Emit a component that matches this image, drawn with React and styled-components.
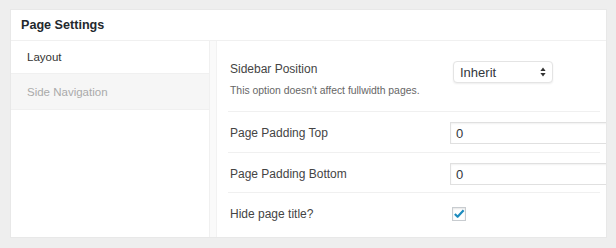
import React from 'react'
import styled, { createGlobalStyle } from 'styled-components'

const GlobalStyle = createGlobalStyle`
  html, body {
    margin: 0;
    padding: 0;
    background: #eeeeee;
    font-family: "Liberation Sans", Arial, sans-serif;
  }
`

const Page = styled.div`
  width: 616px;
  height: 248px;
  padding: 9px 9px 10px 10px;
  box-sizing: border-box;
`

const Panel = styled.div`
  height: 100%;
  background: #fff;
  border: 1px solid #e8e8e8;
  box-sizing: border-box;
  display: flex;
  flex-direction: column;
  overflow: hidden;
`

const Header = styled.div`
  height: 30px;
  flex: none;
  display: flex;
  align-items: center;
  padding-left: 10px;
  font-size: 12.6px;
  font-weight: bold;
  color: #23282d;
  border-bottom: 1px solid #f0f0f0;
`

const Body = styled.div`
  flex: 1;
  display: flex;
  min-height: 0;
`

const Nav = styled.div`
  width: 198px;
  flex: none;
  border-right: 1px solid #f0f0f0;
`

const Tab = styled.div`
  display: flex;
  align-items: center;
  padding-left: 16px;
  font-size: 11.5px;
  color: ${p => (p.$active ? '#333' : '#aaa')};
  background: ${p => (p.$active ? '#fff' : '#f6f6f6')};
  border-bottom: 1px solid #f0f0f0;
  height: ${p => (p.$active ? '32px' : '35px')};
`

const Gutter = styled.div`
  width: 6px;
  flex: none;
  background: #fafafa;
`

const Content = styled.div`
  flex: 1;
  border-left: 1px solid #f2f2f2;
  padding-left: 11px;
  overflow: hidden;
`

const Row = styled.div`
  display: grid;
  grid-template-columns: 222px 1fr;
  align-items: ${p => (p.$top ? 'start' : 'center')};
  padding: ${p => p.$pad};
  margin-right: 6px;
  border-bottom: ${p => (p.$last ? 'none' : '1px solid #f0f0f0')};
`

const LabelCell = styled.div`
  padding-left: 2px;
`

const Label = styled.div`
  font-size: 12px;
  line-height: 16px;
  color: #444;
`

const Desc = styled.div`
  margin-top: 7px;
  font-size: 10.4px;
  line-height: 14px;
  color: #666;
`

const Field = styled.div`
  display: flex;
  align-items: center;
  min-width: 0;
`

const Select = styled.div`
  margin-left: 3px;
  width: 100px;
  height: 22px;
  box-sizing: border-box;
  border: 1px solid #e4e4e4;
  border-radius: 4px;
  box-shadow: 0 1px 2px rgba(0, 0, 0, 0.07);
  display: flex;
  align-items: center;
  justify-content: space-between;
  padding: 0 6px;
  font-size: 13px;
  color: #32373c;
  background: #fff;
`

const Input = styled.div`
  width: 200px;
  flex: none;
  height: 22px;
  box-sizing: border-box;
  border: 1px solid #e0e0e0;
  box-shadow: inset 0 1px 2px rgba(0, 0, 0, 0.06);
  display: flex;
  align-items: center;
  padding-left: 5px;
  font-size: 13px;
  color: #32373c;
  background: #fff;
`

const Check = styled.div`
  margin-left: 2px;
  width: 14px;
  height: 14px;
  box-sizing: border-box;
  border: 1px solid #c8ccd0;
  box-shadow: inset 0 1px 2px rgba(0, 0, 0, 0.1);
  background: #fff;
  display: flex;
  align-items: center;
  justify-content: center;
`

const Arrows = () => (
  <svg width="6" height="10" viewBox="0 0 6 10">
    <path d="M3 0.5 L5.6 4 H0.4 Z" fill="#333" />
    <path d="M3 9.5 L5.6 6 H0.4 Z" fill="#333" />
  </svg>
)

const Tick = () => (
  <svg width="12" height="12" viewBox="0 0 13 13">
    <path d="M2 6.5 L5 9.5 L11.5 2.5" fill="none" stroke="#1e8cbe" strokeWidth="2.4" strokeLinejoin="round" />
  </svg>
)

export default function App() {
  return (
    <>
      <GlobalStyle />
      <Page>
        <Panel>
          <Header>Page Settings</Header>
          <Body>
            <Nav>
              <Tab $active>Layout</Tab>
              <Tab>Side Navigation</Tab>
            </Nav>
            <Gutter />
            <Content>
              <Row $top $pad="20px 0 13px">
                <LabelCell>
                  <Label>Sidebar Position</Label>
                  <Desc>This option doesn't affect fullwidth pages.</Desc>
                </LabelCell>
                <Field>
                  <Select>
                    <span>Inherit</span>
                    <Arrows />
                  </Select>
                </Field>
              </Row>
              <Row $pad="10px 0 8px">
                <LabelCell>
                  <Label>Page Padding Top</Label>
                </LabelCell>
                <Field>
                  <Input>0</Input>
                </Field>
              </Row>
              <Row $pad="10px 0 7px">
                <LabelCell>
                  <Label>Page Padding Bottom</Label>
                </LabelCell>
                <Field>
                  <Input>0</Input>
                </Field>
              </Row>
              <Row $last $pad="13px 0 13px">
                <LabelCell>
                  <Label>Hide page title?</Label>
                </LabelCell>
                <Field>
                  <Check>
                    <Tick />
                  </Check>
                </Field>
              </Row>
            </Content>
          </Body>
        </Panel>
      </Page>
    </>
  )
}
